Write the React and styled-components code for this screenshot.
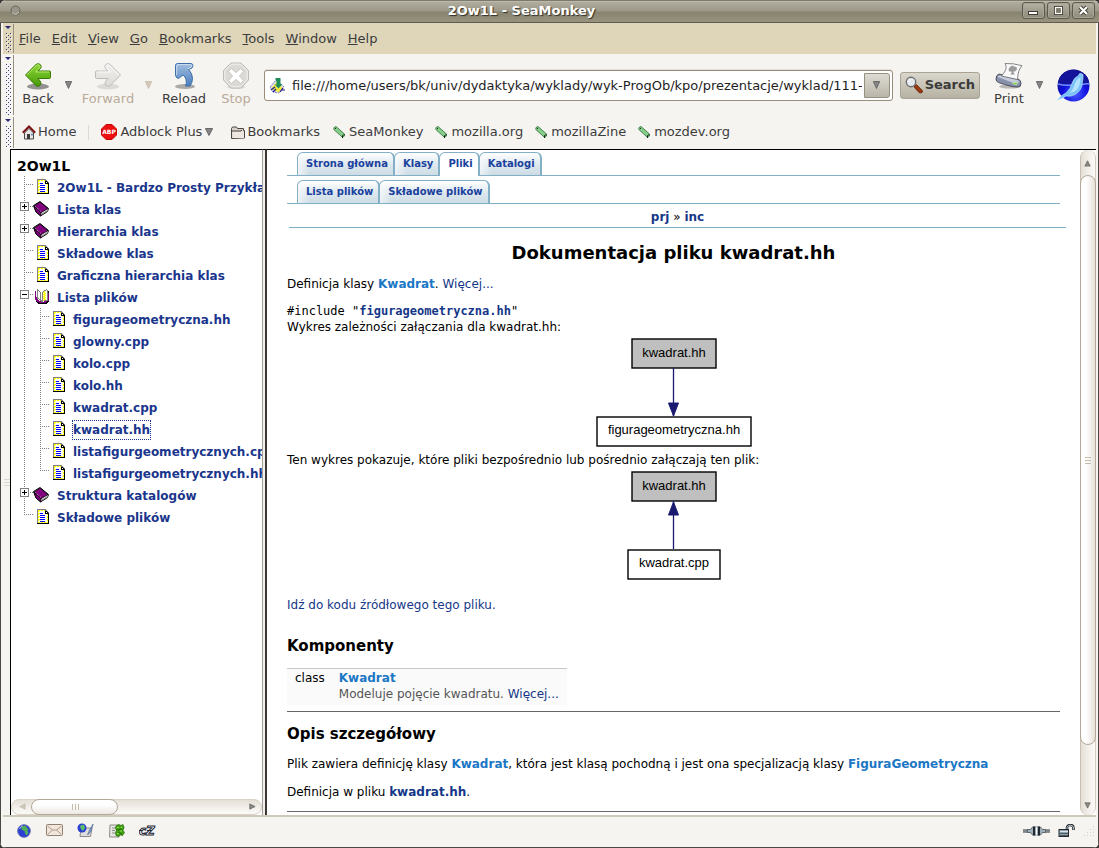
import React from "react";
import styled, { createGlobalStyle } from "styled-components";

const uiFont = '"DejaVu Sans", Verdana, sans-serif';
const pageFont = '"DejaVu Sans", Verdana, sans-serif';

const Global = createGlobalStyle`
  * { box-sizing: border-box; }
  body { margin: 0; background: #3b3833; }
  button { border: 0; padding: 0; margin: 0; background: none; font: inherit; color: inherit; }
  svg { display: block; flex: none; }
  a { text-decoration: none; color: inherit; }
  ul { list-style: none; margin: 0; padding: 0; }
`;

/* ---------- window ---------- */

const Window = styled.div`
  height: 100vh;
  display: flex;
  flex-direction: column;
  font: 13px/18px ${uiFont};
  color: #3c3c3c;
  background: #f6f4f1;
  border-radius: 6px;
  overflow: hidden;
`;

const TitleBar = styled.header`
  flex: none;
  height: 23px;
  display: flex;
  align-items: center;
  padding: 0 4px 2px 10px;
  border-top: 1px solid #7d796c;
  border-bottom: 1px solid #5f5b4e;
  background: linear-gradient(#c9c5b8 0, #b0ac9d 1px, #9d998a 10px, #87836f 11px, #98937f 100%);
`;

const TitleText = styled.h1`
  flex: 1;
  margin: 0;
  text-align: center;
  font: bold 13px/18px ${uiFont};
  color: #fff;
  text-shadow: 1px 1px 1px #2e2c26;
`;

const WindowButtons = styled.div`
  display: flex;
  gap: 2px;
`;

const WindowButton = styled.button`
  width: 23px;
  height: 17px;
  display: flex;
  align-items: center;
  justify-content: center;
  border: 1px solid #5d594c;
  border-radius: 3px;
  background: linear-gradient(#b5b1a3, #8e8a7a);
  box-shadow: inset 0 0 0 1px #a9a596;
`;

const Body = styled.div`
  flex: 1;
  min-height: 0;
  display: flex;
  flex-direction: column;
  border: solid #4b4741;
  border-width: 0 1px 1px;
  padding: 0 2px;
`;

const Bar = styled.div`
  flex: none;
  display: flex;
  height: ${(p) => p.$height}px;
  background: ${(p) => p.$bg || "transparent"};
  padding-left: 2px;
`;

const GripBox = styled.div`
  width: 9px;
  margin: 1px 0;
  border-right: 1px solid #96917f;
  overflow: hidden;
`;

const MenuList = styled.nav`
  display: flex;
  align-items: center;
  gap: 11px;
  padding-left: 5px;
`;

const MenuItem = styled.button`
  &::first-letter { text-decoration: underline; }
`;

/* ---------- navigation toolbar ---------- */

const Tools = styled.div`
  flex: 1;
  min-width: 0;
  display: flex;
  align-items: center;
  padding: 0 6px 0 6px;
`;

const ToolButton = styled.button`
  flex: none;
  width: ${(p) => p.$width}px;
  display: flex;
  flex-direction: column;
  align-items: center;
  color: ${(p) => (p.disabled ? "#b9ab99" : "#3c3c3c")};
  margin-right: ${(p) => p.$gap || 0}px;
`;

const DropArrow = styled.button`
  flex: none;
  margin-right: ${(p) => p.$gap || 0}px;
`;

const UrlBox = styled.div`
  flex: 1;
  min-width: 0;
  height: 31px;
  display: flex;
  align-items: center;
  gap: 6px;
  padding: 0 2px 0 4px;
  background: #fff;
  border: 1px solid #9a8c7c;
  border-radius: 3px;
  box-shadow: 0 -1px 0 #e4dfd6;
`;

const UrlInput = styled.input`
  flex: 1;
  min-width: 0;
  height: 24px;
  border: 0;
  padding: 0;
  margin: 0;
  outline: 0;
  background: transparent;
  font: 13px/18px ${uiFont};
  color: #1e1e1e;
`;

const UrlDrop = styled.button`
  width: 26px;
  height: 25px;
  display: flex;
  align-items: center;
  justify-content: center;
  border: 1px solid #96917f;
  border-radius: 0 3px 3px 0;
  background: linear-gradient(#dedbd3, #b9b5a8);
  margin-left: -4px;
`;

const SearchButton = styled.button`
  flex: none;
  height: 27px;
  display: flex;
  align-items: center;
  gap: 2px;
  margin: 0 13px 0 7px;
  padding: 0 4px;
  border: 1px solid #a8a393;
  border-radius: 3px;
  background: linear-gradient(#d9d6cc, #b6b2a3);
  font-weight: bold;
  color: #3a3a3a;
`;

/* ---------- bookmarks toolbar ---------- */

const Links = styled.nav`
  display: flex;
  align-items: center;
  gap: 12px;
  padding: 0 0 1px 8px;
`;

const LinkItem = styled.a`
  display: flex;
  align-items: center;
  gap: ${(p) => p.$gap || 4}px;
  padding-right: ${(p) => p.$end || 0}px;
`;

const LinkDivider = styled.span`
  width: 1px;
  height: 15px;
  background: #dedad3;
`;

/* ---------- frames ---------- */

const Frames = styled.main`
  flex: 1;
  min-height: 0;
  display: flex;
`;

const SideSplitter = styled.div`
  flex: none;
  width: 7px;
  display: flex;
  align-items: center;
  justify-content: center;
`;

const TreeFrame = styled.aside`
  flex: none;
  width: 252px;
  display: flex;
  flex-direction: column;
  background: #fff;
  border: solid #000;
  border-width: 1px 0 0 1px;
  font: bold 12px/22px ${pageFont};
  color: #1a368c;
`;

const TreeScroll = styled.div`
  flex: 1;
  min-height: 0;
  overflow: hidden;
  padding: 6px 0 0 6px;
`;

const TreeTitle = styled.h2`
  margin: 0;
  font: bold 14px/20px ${pageFont};
  color: #000;
`;

const TreeRow = styled.li`
  display: flex;
  height: 22px;
  white-space: nowrap;
`;

const TreeLink = styled.a`
  height: 18px;
  line-height: 18px;
  margin-top: 3px;
  outline: ${(p) => (p.$active ? "1px dotted #1a368c" : "0")};
`;

const FrameSplitter = styled.div`
  flex: none;
  width: 5px;
  border: solid;
  border-width: 1px 2px 0 1px;
  border-color: #000 #3c3935 #3c3935 #a3a09a;
  background: #f1efeb;
`;

const DocFrame = styled.section`
  flex: 1;
  min-width: 0;
  display: flex;
  border-top: 1px solid #000;
  background: #fff;
`;

const Doc = styled.article`
  flex: 1;
  min-width: 0;
  overflow: hidden;
  padding: 2px 20px 0;
  font: 12px/16px ${pageFont};
  color: #000;
`;

const Tabs = styled.nav`
  display: flex;
  height: 24px;
  margin-bottom: 4px;
  padding-left: 10px;
  border-bottom: 1px solid #84b0c7;
`;

const Tab = styled.a`
  height: ${(p) => (p.$active ? 24 : 23)}px;
  padding: 0 5px 0 8px;
  border: solid #84b0c7;
  border-width: 1px 2px 0 1px;
  margin-right: -1px;
  border-radius: 6px 6px 0 0;
  background: ${(p) => (p.$active ? "#fff" : "linear-gradient(90deg, #ffffff99, #ffffff00 12px), linear-gradient(#ffffff, #dfe9ef 50%, #cddce4)")};
  font: bold 10px/21px ${pageFont};
  color: #1a419d;
  white-space: nowrap;
`;

const NavPath = styled.div`
  height: 20px;
  margin: 2px -6px 0 2px;
  border-bottom: 1px solid #84b0c7;
  text-align: center;
  line-height: 18px;
`;

const PageTitle = styled.h1`
  margin: 14px 0 12px;
  font: bold 18px/22px ${pageFont};
  text-align: center;
`;

const Para = styled.p`
  margin: 0 0 ${(p) => p.$after || 12}px;
  white-space: nowrap;
`;

const Mono = styled.code`
  display: block;
  font: 12px/16px "DejaVu Sans Mono", monospace;
`;

const Anchor = styled.a`
  color: ${(p) => (p.$visited ? "#1b77c5" : "#153788")};
  font-weight: ${(p) => (p.$plain ? "normal" : "bold")};
`;

const Graph = styled.figure`
  display: flex;
  justify-content: center;
  margin: 0 0 ${(p) => p.$after || 0}px;
`;

const SectionTitle = styled.h2`
  margin: ${(p) => p.$before || 0}px 0 12px;
  font: bold 15px/20px ${pageFont};
`;

const Members = styled.table`
  border-collapse: collapse;
  background: #fafafa;
  border-top: 1px solid #c8c8c8;
  margin-bottom: 6px;
  td { padding: 1px 8px 3px; vertical-align: top; }
  td:last-child { padding-left: 6px; }
`;

const Note = styled.div`
  color: #555;
`;

const Rule = styled.hr`
  margin: 0;
  border: 0;
  height: 1px;
  background: #666;
`;

/* ---------- scrollbars ---------- */

const VScroll = styled.div`
  flex: none;
  width: 16px;
  display: flex;
  flex-direction: column;
  align-items: center;
  border-left: 1px solid #c9bfb0;
  border-right: 1px solid #d3ccc0;
  border-radius: 8px;
  background: linear-gradient(90deg, #e4dfd6, #f4f1ec 60%, #fbfaf8);
`;

const VThumb = styled.div`
  flex: 570;
  width: 16px;
  display: flex;
  align-items: center;
  justify-content: center;
  border: 1px solid #b5a797;
  border-radius: 8px;
  background: linear-gradient(90deg, #fff 35%, #e6e1d9);
`;

const VRest = styled.div`
  flex: 50;
`;

const ArrowCell = styled.button`
  width: ${(p) => p.$w}px;
  height: ${(p) => p.$h}px;
  flex: none;
  display: flex;
  align-items: center;
  justify-content: center;
`;

const HScroll = styled.div`
  flex: none;
  height: 16px;
  display: flex;
  align-items: center;
  border: 1px solid #d9d3c8;
  border-radius: 8px;
  background: linear-gradient(#e4dfd6, #f4f1ec 60%, #fbfaf8);
`;

const HThumb = styled.div`
  width: 87px;
  height: 16px;
  display: flex;
  align-items: center;
  justify-content: center;
  border: 1px solid #b5a797;
  border-radius: 8px;
  background: linear-gradient(#fff 35%, #ece8e1);
`;

const Spacer = styled.span`
  flex: 1;
`;

const StatusBar = styled.footer`
  flex: none;
  height: 32px;
  display: flex;
  align-items: center;
  gap: 14px;
  padding: 0 1px 3px 12px;
  border-top: 2px solid #cfc9bc;
`;

const StatusButton = styled.button`
  display: flex;
  width: 17px;
  justify-content: center;
`;

const StatusRight = styled.div`
  flex: 1;
  display: flex;
  justify-content: flex-end;
  align-items: center;
  gap: 8px;
`;

/* ---------- drawings ---------- */

const Grip = ({ id }) => (
  <GripBox>
    <svg width="8" height="100%">
      <defs>
        <pattern id={id} width="4" height="4" patternUnits="userSpaceOnUse" x="1" y="9">
          <rect x="0" y="0" width="1" height="1" fill="#3a3a80" />
          <rect x="2" y="2" width="1" height="1" fill="#3a3a80" />
          <rect x="1" y="1" width="1" height="1" fill="#fff" />
        </pattern>
      </defs>
      <path d="M0 2h6l-3 3z" fill="#26267a" />
      <rect x="0" y="8" width="7" height="100%" fill={`url(#${id})`} />
    </svg>
  </GripBox>
);

const Down = ({ w = 7, light }) => (
  <svg width={w} height="8" viewBox="0 0 7 8" preserveAspectRatio="none">
    <path d="M.3 .5h6.4L3.5 7.5z" fill={light ? "#d3cabc" : "#858585"} stroke={light ? "#c5b9a8" : "#5c5c5c"} strokeWidth=".8" />
  </svg>
);

const BackIcon = ({ forward }) => {
  const id = forward ? "fwdg" : "backg";
  return (
    <svg width="28" height="28" viewBox="0 0 28 28">
      <defs>
        <linearGradient id={id} x1="0" y1="0" x2="0" y2="1">
          <stop offset="0" stopColor={forward ? "#f1f0ee" : "#8fd93a"} />
          <stop offset="1" stopColor={forward ? "#dddbd7" : "#469a06"} />
        </linearGradient>
      </defs>
      <ellipse cx="14" cy="24.500" rx="11" ry="3" fill="#000" opacity={forward ? 0.1 : 0.4} />
      <g transform={forward ? "matrix(-1 0 0 1 28 0)" : undefined}>
        <path
          d="M1.500 13L12.500 2q2.500-1 4 .8t0 3.700L14 9h11.500q1 0 1 1v5.500q0 1-1 1H14l2.500 3q1.300 2-.3 3.700t-3.700 1z"
          fill={`url(#${id})`}
          stroke={forward ? "#bdbbb7" : "#3a7a08"}
          strokeLinejoin="round"
        />
        <path d="M3 13L13 3q1.500-.7 2.500.5t0 2.300L11.500 10H25" fill="none" stroke={forward ? "#fff" : "#b5ec6c"} strokeWidth=".9" />
      </g>
    </svg>
  );
};

const ReloadIcon = () => (
  <svg width="28" height="28" viewBox="0 0 28 28">
    <defs>
      <linearGradient id="relg" x1="0" y1="0" x2="0" y2="1">
        <stop offset="0" stopColor="#a3bedf" />
        <stop offset="1" stopColor="#4a7fc0" />
      </linearGradient>
    </defs>
    <ellipse cx="15" cy="24.500" rx="10" ry="2.500" fill="#000" opacity=".3" />
    <path
      d="M5.500 13.500V3.500q0-2 2-2h13.500q2 .3 2 2.200 0 2.800-4.500 3.800 4 4 4 9 0 4-2.500 7.500h-4.500q1.500-3 .5-6.500-.7-3-3-4.500l-4.500 3.500q-2.500-.5-3-3z"
      fill="url(#relg)"
      stroke="#3e6ea8"
      strokeLinejoin="round"
    />
    <path d="M6.700 13V3.500q0-.9 1.200-.9h12.500q1.500.2 1.500 1.400-.5 2-4.400 2.600" fill="none" stroke="#cfe0f2" strokeWidth=".9" />
  </svg>
);

const StopIcon = () => (
  <svg width="28" height="28" viewBox="0 0 28 28">
    <ellipse cx="14" cy="25" rx="9" ry="2" fill="#000" opacity=".1" />
    <path d="M9 1h10l7.500 7.500v9.500L19 26H9l-7.500-8V8.500z" fill="#dcdad7" stroke="#bdbbb8" />
    <path d="M9.500 2.200h9l6.800 6.800v8.500L18.500 24.700h-9L2.700 17.500V9z" fill="none" stroke="#f2f1ef" />
    <path d="M6.500 9.500L9.500 6.500 14 10.600 18.500 6.500l3 3-4.100 4.500 4.100 4.500-3 3-4.500-4.100L9.500 21.500l-3-3 4.100-4.500z" fill="#fff" stroke="#bfbdba" strokeWidth=".8" />
  </svg>
);

const PrintIcon = () => (
  <svg width="28" height="28" viewBox="0 0 28 28">
    <ellipse cx="15" cy="24.500" rx="11" ry="2" fill="#000" opacity=".25" />
    <path d="M1 17q0-4 3-5l19 5q3 1 3 4.500 0 3.500-3.500 3.500-6 0-19-4.500Q1 19.500 1 17z" fill="#8791ab" stroke="#3f4450" strokeWidth=".9" />
    <path d="M2.500 15q1-2 3-1.500l17 4.500q2 1 2 2.500l-6 .5z" fill="#c5cbda" />
    <path d="M10 1.500q8-.5 17 2.200-4 3.800-4.500 13.800L6.500 14q4-4.500 4.500-7.500.5-3.500-1-5z" fill="#fafafa" stroke="#6a6a6a" strokeWidth=".8" />
    <path d="M15 5l2-1.500 2 1 2.500.5.5 2.500-2 2-1.500 0 .5 2 1 1h-5l1.500-1.500V9.500l-2.500 0-.5-2.200z" fill="#9b9b9b" />
    <path d="M18.500 20l4 1.200-1 1.500-4-1z" fill="#6fd22c" stroke="#e9f8dc" strokeWidth=".5" />
  </svg>
);

const SeaMonkeyLogo = () => (
  <svg width="33" height="33" viewBox="0 0 33 33">
    <defs>
      <radialGradient id="smg" cx=".55" cy=".75" r=".75">
        <stop offset="0" stopColor="#4a5cff" />
        <stop offset=".5" stopColor="#1010e0" />
        <stop offset="1" stopColor="#0a0a80" />
      </radialGradient>
    </defs>
    <circle cx="16.500" cy="16.500" r="16" fill="url(#smg)" />
    <path d="M1 13.500Q3 4 12 1.200q9-2 16 4.300 4 4 4 9-8-1-16 1-8 0-15-2z" fill="#14149a" />
    <path d="M1 15q7 2 14 1M25 15.500q4-1 7.500-.5" stroke="#6f90f5" strokeWidth="1.500" fill="none" />
    <path d="M24 4.500q-2-.5-2.500 2Q16.500 9 15.200 14 13.500 20 9.500 23.500L3.500 27.500 0 31l6-2 3-2q5 1 9-1.500Q25.500 21 25.200 14 26.500 9 26 6q-.5-1.500-2-1.500z" fill="#78c2fb" stroke="#c5e8ff" strokeWidth=".6" />
    <path d="M23.500 8Q18.500 11 17.500 16q-1.500 5-5 8 4 0 7-3 4-4 4-13z" fill="#b4e2ff" />
  </svg>
);

const PageIcon = () => (
  <svg width="17" height="17" viewBox="0 0 17 17">
    <path d="M1 10l6-7 8 7-5 6-6-1z" fill="#dcdcf4" stroke="#5a5aa8" strokeWidth=".8" strokeDasharray="2 1" />
    <path d="M2.500 11l5-6 6 6-4 4.500-4-2z" fill="#f2e93c" />
    <path d="M6.500 1h5v6h2l-4 4.500-4-4h2V4l-1-1z" fill="#1f8d5a" />
    <path d="M2 13l4-3M4 15l3-3M12 13h4M11 15l3-4" stroke="#1b1b8c" strokeWidth="1.200" />
  </svg>
);

const Magnifier = () => (
  <svg width="18" height="18" viewBox="0 0 18 18">
    <path d="M9.500 9.500l1.800-1 6 6q.8 2-1.300 2.500l-2-.5-4.500-5z" fill="#9a3a10" stroke="#5f1f06" strokeWidth=".8" />
    <circle cx="6" cy="6" r="4.700" fill="#e4e9f0" stroke="#6e6e6e" strokeWidth="1.400" />
    <path d="M3.500 6q.3-2.300 2.500-2.500" stroke="#fff" fill="none" />
  </svg>
);

const HomeIcon = () => (
  <svg width="14" height="15" viewBox="0 0 14 15">
    <path d="M2.500 8v6h9V8L7 3.500z" fill="#e9e7e3" stroke="#4a4a4a" />
    <path d="M.8 7.800L7 1.500l6.200 6.300" fill="none" stroke="#7c1414" strokeWidth="2" />
    <rect x="5" y="9" width="3" height="5" fill="#3a3a3a" />
    <rect x="9" y="8.500" width="2" height="2" fill="#7c94b8" />
  </svg>
);

const AbpText = styled.text`
  font: bold 6px ${uiFont};
  fill: #fff;
`;

const AbpIcon = () => (
  <svg width="16" height="16" viewBox="0 0 16 16">
    <path d="M5 .5h6L15.500 5v6L11 15.500H5L.5 11V5z" fill="#ee1010" stroke="#c40808" />
    <AbpText x="8" y="10" textAnchor="middle">ABP</AbpText>
  </svg>
);

const FolderIcon = () => (
  <svg width="14" height="13" viewBox="0 0 14 13">
    <path d="M.5 12.500v-10l1-1.500h4l1 1.500h6v2h1v7.500z" fill="#d9cfca" stroke="#4b4542" />
    <path d="M1.500 5.500h11.500v6.500H1.500z" fill="#eee6e1" />
    <path d="M1 5h9l1-1" stroke="#4b4542" fill="none" />
  </svg>
);

const TagIcon = () => (
  <svg width="12" height="12" viewBox="0 0 12 12">
    <path d="M1 1.500L3 .5 11.500 8v2L9.500 11.500 8 10 .8 3.500z" fill="#86cf8a" stroke="#2c6b35" strokeWidth=".8" />
    <path d="M9.500 12v-2.500l2-1" fill="none" stroke="#0e2a12" />
    <rect x="2" y="2" width="1" height="1" fill="#133a18" />
  </svg>
);

const Node = ({ kind, last }) => (
  <svg width="16" height="22" viewBox="0 0 16 22" shapeRendering="crispEdges">
    <path d={last ? "M7.500 0v9" : "M7.500 0v22"} stroke="#808080" strokeDasharray="1 1" />
    {kind !== "line" && <path d="M7 8.500h9" stroke="#808080" strokeDasharray="1 1" />}
    {(kind === "plus" || kind === "minus") && (
      <>
        <rect x="3.500" y="4.500" width="8" height="8" fill="#fff" stroke="#808080" />
        <path d={kind === "plus" ? "M5 8.500h5M7.500 6v5" : "M5 8.500h5"} stroke="#000" />
      </>
    )}
  </svg>
);

const inks = { g: "#808080", k: "#000000", w: "#ffffff", c: "#ffffc0", y: "#ffff00", b: "#0000ff", p: "#800080" };

const docPixels = [
  "ggggggggg   ",
  "gyycyycygg  ",
  "gycwwwwckkg ",
  "gcwwwwwckwkg",
  "gyybbbwckkkk",
  "gycwwwwwwcyk",
  "gcwbbbbbwwck",
  "gyywwwwwwcyk",
  "gycbbbbbwwyk",
  "gcwwwwwwwcck",
  "gyybbbbbwwyk",
  "gycwwwwwwcyk",
  "gcwbbbbbwwck",
  "gyycyycyycyk",
  "kkkkkkkkkkkk",
];

const openBookPixels = [
  "  g        g  ",
  "  gg     ggwg ",
  "p gwg   gycwgk",
  "p gwwg gyycwgk",
  "p gwwg gcyywgp",
  "p gwwg gyycwgp",
  "p gwwg gcyywgp",
  "p gwwg gyycwgp",
  "ppgwwg gcyywgp",
  "ppggwg gyycwgp",
  "ppp gg gcyywgp",
  " ppp gggyggggp",
  " kppppgg pppkk",
  "  kkpppppppkk ",
  "   kkkkkkkkk  ",
];

const PixelArt = ({ rows, x, y }) => (
  <svg width="24" height="22" viewBox="0 0 24 22" shapeRendering="crispEdges">
    {rows.flatMap((row, r) =>
      [...row].map((c, i) => (c === " " ? null : <rect key={`${r}-${i}`} x={x + i} y={y + r} width="1" height="1" fill={inks[c]} />))
    )}
  </svg>
);

const DocIcon = () => <PixelArt rows={docPixels} x={4} y={3} />;
const OpenBookIcon = () => <PixelArt rows={openBookPixels} x={2} y={3} />;

const BookIcon = () => (
  <svg width="24" height="22" viewBox="0 0 24 22">
    <path d="M.5 7.500L7 3.500l8.500 7-1 3-7 4.500L3 14z" fill="#fff" stroke="#000" strokeLinejoin="round" />
    <path d="M1 8l6-4 8 6.500-7 4.200z" fill="#800080" stroke="#000" strokeWidth=".8" />
    <path d="M1 8l7 6.700v3L3 14z" fill="#800080" stroke="#000" strokeWidth=".8" />
    <path d="M2.500 8.500l5.500 5" stroke="#d6b0d6" strokeDasharray="1 1" />
    <path d="M9 16l6-4" stroke="#808080" />
  </svg>
);

const GraphText = styled.text`
  font: 13px "Liberation Sans", Arial, sans-serif;
  fill: #000;
`;

const IncludeGraph = ({ label, other, otherWidth, reverse }) => (
  <svg width="156" height="117" viewBox="0 0 156 117">
    <rect x="36" y="4" width="84" height="29" fill="#bfbfbf" stroke="#000" strokeWidth="1.400" />
    <GraphText x="78" y="22" textAnchor="middle">{label}</GraphText>
    <rect x={78 - otherWidth / 2} y="82" width={otherWidth} height="29" fill="#fff" stroke="#000" strokeWidth="1.400" />
    <GraphText x="78" y="99" textAnchor="middle">{other}</GraphText>
    <path d="M77.500 33v48" stroke="#191970" strokeWidth="1.300" />
    <path d={reverse ? "M77.500 34l5 13h-10z" : "M77.500 81l5-13h-10z"} fill="#191970" stroke="#191970" />
  </svg>
);

const ScrollArrow = ({ dir, light }) => {
  const d = { up: "M0 7h6L3 1z", down: "M0 1h6L3 7z", left: "M7 0v6L1 3z", right: "M1 0v6l6-3z" }[dir];
  return (
    <svg width="8" height="8" viewBox="-1 -1 9 9">
      <path d={d} fill={light ? "#cfc8bb" : "#8a8a86"} stroke={light ? "#bdb4a5" : "#55534f"} strokeWidth=".7" />
    </svg>
  );
};

const Ridges = ({ vertical, color = "#c5bbab" }) => (
  <svg width="8" height="8" viewBox="0 0 8 8" shapeRendering="crispEdges">
    <path d={vertical ? "M1.500 1v6M4.500 1v6M7.500 1v6" : "M1 1.500h6M1 4.500h6M1 7.500h6"} stroke={color} />
  </svg>
);

const Globe = () => (
  <svg width="14" height="14" viewBox="0 0 14 14">
    <circle cx="7" cy="7" r="6.300" fill="#2b3fd0" stroke="#5a64b0" strokeWidth=".9" />
    <path d="M4 3q3-2 5-1l1 2 1.500 1-1 2 1 2-2 2.500-1.500-2-.5-2.500L5 6z" fill="#4fae5a" />
    <path d="M2.500 5q1-2 3-3" stroke="#a8c0ff" fill="none" />
  </svg>
);

const Mail = () => (
  <svg width="18" height="13" viewBox="0 0 18 13">
    <rect x=".5" y=".5" width="16" height="11" rx="1" fill="#f0e6dc" stroke="#94806e" />
    <path d="M1.500 2l5 4h4l5-4M1.500 10.500l5-4.500M15.500 10.500l-5-4.500" fill="none" stroke="#b09c8a" />
  </svg>
);

const Composer = () => (
  <svg width="17" height="15" viewBox="0 0 17 15">
    <path d="M4 5h11l-1.500 8.500H3z" fill="#dedede" stroke="#8c8c8c" />
    <circle cx="5" cy="5" r="4.500" fill="#2b3fd0" />
    <path d="M3 3q3-2 4-1l1 3-2 3-2-2z" fill="#5fbf6a" />
    <path d="M16 1l-4 7-1.500 4 3-3 2.500-7z" fill="#7fa6dc" stroke="#384a6e" strokeWidth=".5" />
  </svg>
);

const AddressBook = () => (
  <svg width="16" height="14" viewBox="0 0 16 14">
    <path d="M1 1h9v12H.5z" fill="#e6e6e2" stroke="#8c8c86" />
    <path d="M3 4h3M3 6.500h3M3 9h3" stroke="#8c8c86" />
    <path d="M7 2l3-1.500 2 1 2-1 1 3-1 3 1.500 2-2 3-2-.5-2 1.500-2.500-1-.5-3 1-2-1-2z" fill="#43a012" stroke="#216a06" strokeWidth=".7" />
    <path d="M8 3.500h2M12 4l1-1M11 7h2M8 9.500h2" stroke="#8fe04e" strokeWidth="1.200" />
    <path d="M8 6l5-1M9 8l4 2" stroke="#216a06" />
  </svg>
);

const CzText = styled.text`
  font: italic bold 12px ${uiFont};
  fill: #fff;
  stroke: #1e2836;
  stroke-width: 1px;
`;

const ChatZilla = () => (
  <svg width="18" height="13" viewBox="0 0 18 13">
    <CzText x="0" y="11">cZ</CzText>
    <path d="M0 6.500h4M8 6.500h5" stroke="#1e2836" />
  </svg>
);

const Plug = () => (
  <svg width="27" height="10" viewBox="0 0 27 10">
    <path d="M0 5h27" stroke="#2c3438" strokeWidth="3" />
    <path d="M0 5h27" stroke="#cfd8dc" strokeWidth="1" />
    <path d="M4.500 3.500h3l2-2.500h8l2 2.500h3v3h-3l-2 2.500h-8l-2-2.500h-3z" fill="#9fb0b8" stroke="#4c585e" strokeWidth=".8" />
    <path d="M10 .5h2v9h-2zM15 .5h2v9h-2z" fill="#222a30" />
    <path d="M13.500 1v8" stroke="#fff" />
  </svg>
);

const Lock = () => (
  <svg width="17" height="13" viewBox="0 0 17 13">
    <path d="M9 6V3.500Q9.500 1 12.500 1t3 3v2" fill="none" stroke="#222a30" strokeWidth="2.600" />
    <path d="M9 6V3.500Q9.500 1.200 12.500 1.200t3 2.800v1.500" fill="none" stroke="#b9c6cc" strokeWidth="1" />
    <rect x="1" y="5.500" width="9.500" height="7" fill="#8fa2ac" stroke="#222a30" />
    <path d="M2 7.500h8" stroke="#dbe5ea" />
    <path d="M2 9.500h8M2 11.500h8" stroke="#4b5b64" />
  </svg>
);

const WindowDot = () => (
  <svg width="11" height="11" viewBox="0 0 11 11">
    <circle cx="5.500" cy="5.500" r="4.500" fill="#99958a" stroke="#6a6658" />
    <path d="M2 7.500q3.500 4 7-.5" stroke="#c8c4b6" fill="none" />
  </svg>
);

const WinGlyph = ({ kind }) => (
  <svg width="13" height="11" viewBox="0 0 13 11">
    {kind === "min" && <rect x="1.500" y="6.500" width="9" height="3" fill="#fff" stroke="#3f3c33" />}
    {kind === "max" && (
      <>
        <rect x="2" y="1" width="9" height="9" fill="#3f3c33" />
        <rect x="3.500" y="2.500" width="6" height="6" fill="#7d7969" stroke="#fff" strokeWidth="1.200" />
      </>
    )}
    {kind === "close" && (
      <>
        <path d="M3 2l7 7M10 2L3 9" stroke="#3f3c33" strokeWidth="4" />
        <path d="M3 2l7 7M10 2L3 9" stroke="#fff" strokeWidth="2.200" />
      </>
    )}
  </svg>
);

const ResizeGrip = () => (
  <svg width="12" height="12" viewBox="0 0 12 12" shapeRendering="crispEdges">
    <path d="M1 10.500h11M4 7.500h8M7 4.500h5M10 1.500h2" stroke="#d6d1c7" strokeDasharray="1 2" />
  </svg>
);

/* ---------- content ---------- */

const menus = ["File", "Edit", "View", "Go", "Bookmarks", "Tools", "Window", "Help"];

const bookmarks = ["SeaMonkey", "mozilla.org", "mozillaZine", "mozdev.org"];

const tree = [
  { label: "2Ow1L - Bardzo Prosty Przykład", icon: "doc" },
  { label: "Lista klas", icon: "book", node: "plus" },
  { label: "Hierarchia klas", icon: "book", node: "plus" },
  { label: "Składowe klas", icon: "doc" },
  { label: "Graficzna hierarchia klas", icon: "doc" },
  { label: "Lista plików", icon: "open", node: "minus" },
  { label: "figurageometryczna.hh", icon: "doc", nested: true },
  { label: "glowny.cpp", icon: "doc", nested: true },
  { label: "kolo.cpp", icon: "doc", nested: true },
  { label: "kolo.hh", icon: "doc", nested: true },
  { label: "kwadrat.cpp", icon: "doc", nested: true },
  { label: "kwadrat.hh", icon: "doc", nested: true, active: true },
  { label: "listafigurgeometrycznych.cpp", icon: "doc", nested: true },
  { label: "listafigurgeometrycznych.hh", icon: "doc", nested: true, last: true },
  { label: "Struktura katalogów", icon: "book", node: "plus" },
  { label: "Składowe plików", icon: "doc", last: true },
];

const treeIcons = { doc: DocIcon, book: BookIcon, open: OpenBookIcon };

const TreeItem = ({ item }) => {
  const Icon = treeIcons[item.icon];
  return (
    <TreeRow>
      {item.nested && <Node kind="line" />}
      <Node kind={item.node} last={item.last} />
      <Icon />
      <TreeLink href="#" $active={item.active}>{item.label}</TreeLink>
    </TreeRow>
  );
};

const TabRow = ({ items, active }) => (
  <Tabs>
    {items.map((t) => (
      <Tab key={t} href="#" $active={t === active}>{t}</Tab>
    ))}
  </Tabs>
);

export default function App() {
  return (
    <Window>
      <Global />
      <TitleBar>
        <WindowDot />
        <TitleText>2Ow1L - SeaMonkey</TitleText>
        <WindowButtons>
          <WindowButton aria-label="Minimize"><WinGlyph kind="min" /></WindowButton>
          <WindowButton aria-label="Maximize"><WinGlyph kind="max" /></WindowButton>
          <WindowButton aria-label="Close"><WinGlyph kind="close" /></WindowButton>
        </WindowButtons>
      </TitleBar>
      <Body>
        <Bar $height={31} $bg="#dfd6ba">
          <Grip id="grip-menu" />
          <MenuList>
            {menus.map((m) => <MenuItem key={m}>{m}</MenuItem>)}
          </MenuList>
        </Bar>
        <Bar $height={62}>
          <Grip id="grip-nav" />
          <Tools>
            <ToolButton $width={36} $gap={9}><BackIcon />Back</ToolButton>
            <DropArrow $gap={9} aria-label="Back history"><Down /></DropArrow>
            <ToolButton $width={54} $gap={10} disabled><BackIcon forward />Forward</ToolButton>
            <DropArrow $gap={9} aria-label="Forward history"><Down light /></DropArrow>
            <ToolButton $width={46} $gap={13}><ReloadIcon />Reload</ToolButton>
            <ToolButton $width={32} $gap={12} disabled><StopIcon />Stop</ToolButton>
            <UrlBox>
              <PageIcon />
              <UrlInput aria-label="Address" defaultValue="file:///home/users/bk/univ/dydaktyka/wyklady/wyk-ProgOb/kpo/prezentacje/wyklad/111-klasy/html/index.html" />
              <UrlDrop aria-label="Address history"><Down /></UrlDrop>
            </UrlBox>
            <SearchButton><Magnifier />Search</SearchButton>
            <ToolButton $width={32} $gap={11}><PrintIcon />Print</ToolButton>
            <DropArrow $gap={14} aria-label="Print options"><Down /></DropArrow>
            <SeaMonkeyLogo />
          </Tools>
        </Bar>
        <Bar $height={33}>
          <Grip id="grip-links" />
          <Links>
            <LinkItem href="#" $gap={2}><HomeIcon />Home</LinkItem>
            <LinkDivider />
            <LinkItem href="#" $gap={3} $end={6}><AbpIcon />Adblock Plus <Down w={8} /></LinkItem>
            <LinkItem href="#" $gap={2} $end={1}><FolderIcon />Bookmarks</LinkItem>
            {bookmarks.map((b) => <LinkItem key={b} href="#"><TagIcon />{b}</LinkItem>)}
          </Links>
        </Bar>
        <Frames>
          <SideSplitter><Ridges color="#dcd7ce" /></SideSplitter>
          <TreeFrame>
            <TreeScroll>
              <TreeTitle>2Ow1L</TreeTitle>
              <ul>
                {tree.map((item) => <TreeItem key={item.label} item={item} />)}
              </ul>
            </TreeScroll>
            <HScroll>
              <ArrowCell $w={19} $h={14} aria-label="Scroll left"><ScrollArrow dir="left" light /></ArrowCell>
              <HThumb><Ridges vertical /></HThumb>
              <Spacer />
              <ArrowCell $w={19} $h={14} aria-label="Scroll right"><ScrollArrow dir="right" /></ArrowCell>
            </HScroll>
          </TreeFrame>
          <FrameSplitter />
          <DocFrame>
            <Doc>
              <TabRow items={["Strona główna", "Klasy", "Pliki", "Katalogi"]} active="Pliki" />
              <TabRow items={["Lista plików", "Składowe plików"]} />
              <NavPath><Anchor href="#">prj</Anchor> » <Anchor href="#">inc</Anchor></NavPath>
              <PageTitle>Dokumentacja pliku kwadrat.hh</PageTitle>
              <Para $after={11}>Definicja klasy <Anchor href="#" $visited>Kwadrat</Anchor>. <Anchor href="#" $plain>Więcej...</Anchor></Para>
              <Mono>#include "<Anchor href="#">figurageometryczna.hh</Anchor>"</Mono>
              <div>Wykres zależności załączania dla kwadrat.hh:</div>
              <Graph><IncludeGraph label="kwadrat.hh" other="figurageometryczna.hh" otherWidth={154} /></Graph>
              <div>Ten wykres pokazuje, które pliki bezpośrednio lub pośrednio załączają ten plik:</div>
              <Graph $after={12}><IncludeGraph label="kwadrat.hh" other="kwadrat.cpp" otherWidth={92} reverse /></Graph>
              <Para $after={23}><Anchor href="#" $plain>Idź do kodu źródłowego tego pliku.</Anchor></Para>
              <SectionTitle>Komponenty</SectionTitle>
              <Members>
                <tbody>
                  <tr>
                    <td>class</td>
                    <td>
                      <Anchor href="#" $visited>Kwadrat</Anchor>
                      <Note>Modeluje pojęcie kwadratu. <Anchor href="#" $plain>Więcej...</Anchor></Note>
                    </td>
                  </tr>
                </tbody>
              </Members>
              <Rule />
              <SectionTitle $before={12}>Opis szczegółowy</SectionTitle>
              <Para>
                Plik zawiera definicję klasy <Anchor href="#" $visited>Kwadrat</Anchor>, która jest klasą pochodną i jest ona specjalizacją klasy{" "}
                <Anchor href="#" $visited>FiguraGeometryczna</Anchor>
              </Para>
              <Para $after={11}>Definicja w pliku <Anchor href="#">kwadrat.hh</Anchor>.</Para>
              <Rule />
            </Doc>
            <VScroll>
              <ArrowCell $w={14} $h={25} aria-label="Scroll up"><ScrollArrow dir="up" /></ArrowCell>
              <VThumb><Ridges /></VThumb>
              <VRest />
              <ArrowCell $w={14} $h={20} aria-label="Scroll down"><ScrollArrow dir="down" /></ArrowCell>
            </VScroll>
          </DocFrame>
        </Frames>
        <StatusBar>
          <StatusButton aria-label="Navigator"><Globe /></StatusButton>
          <StatusButton aria-label="Mail"><Mail /></StatusButton>
          <StatusButton aria-label="Composer"><Composer /></StatusButton>
          <StatusButton aria-label="Address book"><AddressBook /></StatusButton>
          <StatusButton aria-label="ChatZilla"><ChatZilla /></StatusButton>
          <StatusRight><Plug /><Lock /><ResizeGrip /></StatusRight>
        </StatusBar>
      </Body>
    </Window>
  );
}
